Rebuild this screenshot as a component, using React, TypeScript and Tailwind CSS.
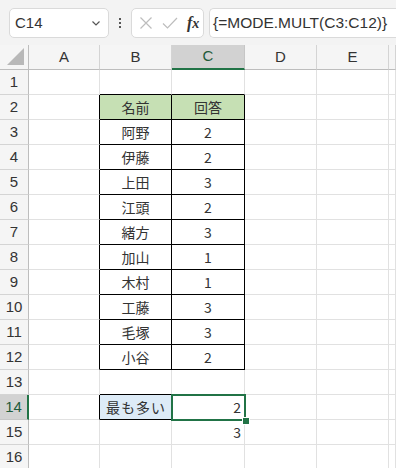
import React from 'react';

const COLS = ['A', 'B', 'C', 'D', 'E', ''];

const NAMES: Record<number, [string, string]> = {
  2: ['名前', '回答'],
  3: ['阿野', '2'],
  4: ['伊藤', '2'],
  5: ['上田', '3'],
  6: ['江頭', '2'],
  7: ['緒方', '3'],
  8: ['加山', '1'],
  9: ['木村', '1'],
  10: ['工藤', '3'],
  11: ['毛塚', '3'],
  12: ['小谷', '2'],
};

const ROWS = Array.from({ length: 16 }, (_, i) => i + 1);

const inTable = (r: number) => r >= 2 && r <= 12;

const cellClass = (r: number, c: number) => {
  // c: 0=A,1=B,2=C,3=D,4=E,5=rest
  let right = 'border-r-[#e1e1e1]';
  let bottom = 'border-b-[#e1e1e1]';
  let bg = 'bg-white';
  if (inTable(r) && (c === 1 || c === 2)) {
    right = 'border-r-black';
    bottom = 'border-b-black';
    if (r === 2) bg = 'bg-[#c6e0b4]';
  }
  if (inTable(r) && c === 0) right = 'border-r-black';
  if (r === 1 && (c === 1 || c === 2)) bottom = 'border-b-black';
  if (r === 14 && c === 1) {
    right = 'border-r-black';
    bottom = 'border-b-black';
    bg = 'bg-[#ddebf7]';
  }
  if (r === 14 && c === 0) right = 'border-r-black';
  if (r === 13 && c === 1) bottom = 'border-b-black';
  return `h-[25px] border-r border-b ${right} ${bottom} ${bg} flex items-center`;
};

const cellText = (r: number, c: number) => {
  if (NAMES[r] && c === 1) return <span className="w-full text-center">{NAMES[r][0]}</span>;
  if (NAMES[r] && c === 2) return <span className="w-full text-center">{NAMES[r][1]}</span>;
  if (r === 14 && c === 1) return <span className="pl-[6px] tracking-[1px]">最も多い</span>;
  if (r === 14 && c === 2) return <span className="w-full text-right pr-[3px]">2</span>;
  if (r === 15 && c === 2) return <span className="w-full text-right pr-[3px]">3</span>;
  return null;
};

const App: React.FC = () => {
  return (
    <div className="w-[396px] h-[468px] overflow-hidden bg-white font-['Noto_Sans_CJK_JP','Liberation_Sans',sans-serif] text-[14px] text-[#333]">
      {/* Formula bar */}
      <div className="h-[45px] bg-[#f3f3f3] flex items-start pt-[8px] pl-[9px]">
        <div className="w-[100px] h-[30px] bg-white border border-[#dadada] rounded-[5px] flex items-center justify-between pl-[5px] pr-[6px]">
          <span className="text-[15px] text-[#333] font-['Liberation_Sans',sans-serif]">C14</span>
          <svg width="12" height="12" viewBox="0 0 12 12" fill="none" stroke="#555" strokeWidth="1.2">
            <path d="M2.5 4.5 L6 8 L9.5 4.5" />
          </svg>
        </div>
        <div className="w-[22px] h-[30px] flex items-center justify-center">
          <svg width="4" height="12" viewBox="0 0 4 12" fill="#555">
            <rect x="1" y="1" width="2" height="2" />
            <rect x="1" y="5" width="2" height="2" />
            <rect x="1" y="9" width="2" height="2" />
          </svg>
        </div>
        <div className="w-[73px] h-[30px] bg-white border border-[#dadada] rounded-[5px] flex items-center pl-[7px] gap-[9px]">
          <svg width="14" height="14" viewBox="0 0 14 14" fill="none" stroke="#bdbdbd" strokeWidth="1.2">
            <path d="M1.5 1.5 L12.5 12.5 M12.5 1.5 L1.5 12.5" />
          </svg>
          <svg width="16" height="14" viewBox="0 0 16 14" fill="none" stroke="#bdbdbd" strokeWidth="1.2">
            <path d="M1 7.5 L5.5 12 L15 2" />
          </svg>
          <span className="font-['Liberation_Serif',serif] italic font-bold text-[16px] text-[#333] leading-none">
            f<span className="text-[14px]">x</span>
          </span>
        </div>
        <div className="ml-[5px] flex-1 h-[30px] bg-white border border-r-0 border-[#dadada] rounded-l-[5px] flex items-center pl-[3px]">
          <span className="text-[15.5px] text-[#333] font-['Liberation_Sans',sans-serif] whitespace-nowrap">{'{=MODE.MULT(C3:C12)}'}</span>
        </div>
      </div>

      {/* Sheet */}
      <div className="relative">
        <div className="grid grid-cols-[29px_71px_72px_73px_72px_72px_1fr]">
          {/* Column header row */}
          <div className="h-[25px] bg-[#f5f5f5] border-r border-b border-r-[#bdbdbd] border-b-[#bdbdbd] flex items-end justify-end pr-[4px] pb-[4px]">
            <svg width="17" height="17" viewBox="0 0 17 17">
              <path d="M17 0 L17 17 L0 17 Z" fill="#b8b8b8" />
            </svg>
          </div>
          {COLS.map((col, i) =>
            col === 'C' ? (
              <div
                key={i}
                className="h-[25px] bg-[#d2d2d2] border-r border-r-[#c6c6c6] border-b-2 border-b-[#217346] flex items-center justify-center text-[#1e5a3a] font-['Liberation_Sans',sans-serif] text-[15px]"
              >
                {col}
              </div>
            ) : (
              <div
                key={i}
                className="h-[25px] bg-[#f5f5f5] border-r border-b border-r-[#d4d4d4] border-b-[#bdbdbd] flex items-center justify-center text-[#333] font-['Liberation_Sans',sans-serif] text-[15px]"
              >
                {col}
              </div>
            )
          )}

          {ROWS.map(r => (
            <React.Fragment key={r}>
              {r === 14 ? (
                <div className="h-[25px] bg-[#d2d2d2] border-r-2 border-r-[#217346] border-b border-b-[#c6c6c6] flex items-center justify-center text-[#1e5a3a] font-['Liberation_Sans',sans-serif] text-[15px]">
                  {r}
                </div>
              ) : (
                <div className="h-[25px] bg-[#f5f5f5] border-r border-b border-r-[#bdbdbd] border-b-[#d4d4d4] flex items-center justify-center text-[#333] font-['Liberation_Sans',sans-serif] text-[15px]">
                  {r}
                </div>
              )}
              {COLS.map((_, c) => (
                <div key={c} className={cellClass(r, c)}>
                  {cellText(r, c)}
                </div>
              ))}
            </React.Fragment>
          ))}
        </div>

        {/* Active cell C14 */}
        <div className="absolute left-[171px] top-[349px] w-[75px] h-[27px] border-2 border-[#217346] pointer-events-none" />
        <div className="absolute left-[242px] top-[372px] w-[6px] h-[6px] bg-[#217346] border border-white box-content pointer-events-none" />
      </div>
    </div>
  );
};

export default App;
